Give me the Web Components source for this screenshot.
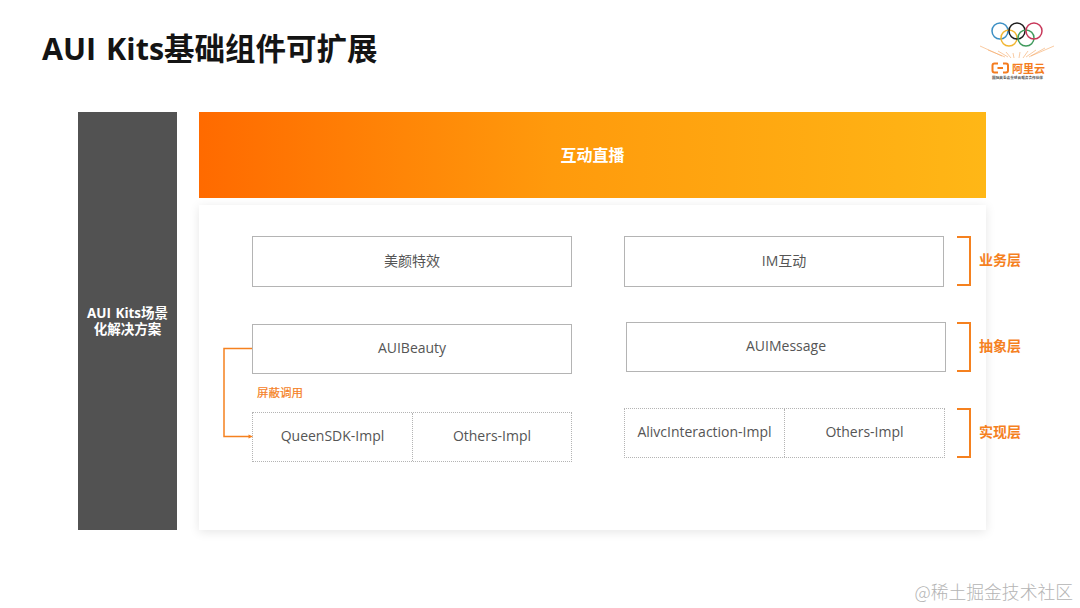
<!DOCTYPE html>
<html lang="zh">
<head>
<meta charset="utf-8">
<title>AUI Kits</title>
<style>
  html, body { margin: 0; background: #fff; }
  body { font-family: "Open Sans", "Noto Sans CJK SC", sans-serif; }
</style>
</head>
<body>
<aui-slide>
  <aui-logo slot="logo"></aui-logo>
  <span slot="title">AUI Kits基础组件可扩展</span>
  <aui-side slot="side">AUI Kits场景<br>化解决方案</aui-side>
  <aui-banner slot="banner">互动直播</aui-banner>
  <aui-card slot="card">
    <aui-column slot="left" top="31">
      <aui-box h="51">美颜特效</aui-box>
      <aui-box gap="37">AUIBeauty</aui-box>
      <aui-note>屏蔽调用</aui-note>
      <aui-impl a="QueenSDK-Impl" b="Others-Impl"></aui-impl>
      <aui-arrow></aui-arrow>
    </aui-column>
    <aui-column slot="right" top="31">
      <aui-box h="51">IM互动</aui-box>
      <aui-box gap="35" shift="2">AUIMessage</aui-box>
      <aui-impl gap="36" w="321" a="AlivcInteraction-Impl" b="Others-Impl"></aui-impl>
    </aui-column>
    <aui-column slot="tags" top="31">
      <aui-tag>业务层</aui-tag>
      <aui-tag gap="36">抽象层</aui-tag>
      <aui-tag gap="36">实现层</aui-tag>
    </aui-column>
  </aui-card>
  <span slot="mark">@稀土掘金技术社区</span>
</aui-slide>

<script>
class AuiSlide extends HTMLElement {
  constructor() {
    super()
    this.attachShadow({mode: 'open'}).innerHTML = `
      <style>
        :host {
          display: block;
          position: relative;
          width: 1080px;
          height: 608px;
          overflow: hidden;
          background: #fff;
        }
        header {
          height: 112px;
          box-sizing: border-box;
          padding: 26px 0 0 42px;
          font-size: 30.5px;
          line-height: 44px;
          font-weight: 700;
          word-spacing: 2px;
          color: #141414;
        }
        main {
          display: grid;
          grid-template-columns: 99px 787px;
          column-gap: 22px;
          padding-left: 78px;
        }
        .stack { display: flex; flex-direction: column; gap: 7px; }
        .logo { position: absolute; left: 982px; top: 14px; }
        .mark {
          position: absolute;
          right: 7px;
          bottom: 5px;
          font-size: 17.8px;
          line-height: 24px;
          color: #b4b4b4;
          font-family: "Noto Sans CJK SC", sans-serif;
          font-weight: 300;
        }
      </style>
      <header><slot name="title"></slot></header>
      <div class="logo"><slot name="logo"></slot></div>
      <main>
        <slot name="side"></slot>
        <div class="stack">
          <slot name="banner"></slot>
          <slot name="card"></slot>
        </div>
      </main>
      <div class="mark"><slot name="mark"></slot></div>
    `
  }
}

class AuiSide extends HTMLElement {
  constructor() {
    super()
    this.attachShadow({mode: 'open'}).innerHTML = `
      <style>
        :host {
          display: flex;
          align-items: center;
          justify-content: center;
          height: 418px;
          background: #525252;
          color: #fff;
          font-size: 13.5px;
          line-height: 16px;
          font-weight: 700;
          word-spacing: 1px;
          text-align: center;
        }
      </style>
      <div><slot></slot></div>
    `
  }
}

class AuiBanner extends HTMLElement {
  constructor() {
    super()
    this.attachShadow({mode: 'open'}).innerHTML = `
      <style>
        :host {
          display: flex;
          align-items: center;
          justify-content: center;
          box-sizing: border-box;
          height: 86px;
          padding-bottom: 3px;
          background: linear-gradient(90deg, #ff6a00 0%, #ff9a0c 45%, #ffb716 100%);
          color: #fff;
          font-size: 16px;
          font-weight: 700;
        }
      </style>
      <slot></slot>
    `
  }
}

class AuiCard extends HTMLElement {
  constructor() {
    super()
    this.attachShadow({mode: 'open'}).innerHTML = `
      <style>
        :host {
          display: grid;
          grid-template-columns: 320px 322px auto;
          column-gap: 52px;
          height: 325px;
          box-sizing: border-box;
          padding-left: 53px;
          background: #fff;
          box-shadow: 0 2px 10px rgba(0, 0, 0, .1);
        }
        .tags { margin-left: -41px; }
      </style>
      <slot name="left"></slot>
      <slot name="right"></slot>
      <div class="tags"><slot name="tags"></slot></div>
    `
  }
}

class AuiColumn extends HTMLElement {
  constructor() {
    super()
    this.attachShadow({mode: 'open'}).innerHTML = `
      <style>
        :host {
          display: flex;
          flex-direction: column;
          align-items: flex-start;
          position: relative;
        }
      </style>
      <slot></slot>
    `
  }
  connectedCallback() {
    this.style.paddingTop = (this.getAttribute('top') || 0) + 'px'
  }
}

class AuiBox extends HTMLElement {
  constructor() {
    super()
    this.attachShadow({mode: 'open'}).innerHTML = `
      <style>
        :host {
          display: flex;
          align-items: center;
          justify-content: center;
          box-sizing: border-box;
          width: 320px;
          height: 50px;
          padding-bottom: 3px;
          border: 1px solid #b4b4b4;
          background: #fff;
          color: #555;
          font-size: 14px;
        }
      </style>
      <slot></slot>
    `
  }
  connectedCallback() {
    this.style.marginTop = (this.getAttribute('gap') || 0) + 'px'
    this.style.marginLeft = (this.getAttribute('shift') || 0) + 'px'
    this.style.height = (this.getAttribute('h') || 50) + 'px'
  }
}

class AuiNote extends HTMLElement {
  constructor() {
    super()
    this.attachShadow({mode: 'open'}).innerHTML = `
      <style>
        :host {
          display: block;
          height: 38px;
          box-sizing: border-box;
          padding: 10px 0 0 5px;
          color: #f5811f;
          font-size: 11.5px;
          line-height: 18px;
          -webkit-text-stroke: .2px #f5811f;
        }
      </style>
      <slot></slot>
    `
  }
}

class AuiImpl extends HTMLElement {
  constructor() {
    super()
    this.attachShadow({mode: 'open'}).innerHTML = `
      <style>
        :host {
          display: grid;
          grid-template-columns: 159px 1fr;
          box-sizing: border-box;
          width: 320px;
          height: 50px;
          border: 1px dotted #b4b4b4;
          color: #555;
          font-size: 14px;
        }
        div { display: flex; align-items: center; justify-content: center; white-space: nowrap; padding-bottom: 3px; }
        div + div { border-left: 1px dotted #b4b4b4; }
      </style>
      <div class="a"></div>
      <div class="b"></div>
    `
  }
  connectedCallback() {
    this.shadowRoot.querySelector('.a').textContent = this.getAttribute('a')
    this.shadowRoot.querySelector('.b').textContent = this.getAttribute('b')
    this.style.marginTop = (this.getAttribute('gap') || 0) + 'px'
    this.style.width = (this.getAttribute('w') || 320) + 'px'
  }
}

// bracket + label on the right of each row
class AuiTag extends HTMLElement {
  constructor() {
    super()
    this.attachShadow({mode: 'open'}).innerHTML = `
      <style>
        :host {
          display: flex;
          align-items: center;
          gap: 8px;
          height: 50px;
          color: #f5811f;
          font-size: 14px;
          font-weight: 700;
          white-space: nowrap;
        }
        span { padding-bottom: 4px; }
        i {
          display: block;
          box-sizing: border-box;
          width: 14px;
          height: 50px;
          border: 2px solid #f5811f;
          border-left: 0;
        }
      </style>
      <i></i><span><slot></slot></span>
    `
  }
  connectedCallback() {
    this.style.marginTop = (this.getAttribute('gap') || 0) + 'px'
  }
}

// connector from AUIBeauty down to the impl row, sits over the left column
class AuiArrow extends HTMLElement {
  constructor() {
    super()
    this.attachShadow({mode: 'open'}).innerHTML = `
      <style>
        :host { position: absolute; left: -30px; top: 142px; display: block; }
        svg { display: block; }
      </style>
      <svg width="31" height="92" viewBox="0 0 31 92" fill="none">
        <path d="M30 1.500H2V89.500H27" stroke="#f5811f" stroke-width="1.500"/>
        <path d="M31 89.500L26.500 87.500V91.500Z" fill="#f5811f"/>
      </svg>
    `
  }
}

class AuiLogo extends HTMLElement {
  constructor() {
    super()
    this.attachShadow({mode: 'open'}).innerHTML = `
      <style>
        :host { display: block; width: 68px; height: 74px; position: relative; }
        svg { position: absolute; left: 0; top: 0; overflow: visible; }
        .name {
          position: absolute;
          left: 30px;
          top: 47px;
          font-size: 11px;
          line-height: 14px;
          font-weight: 700;
          color: #f47c20;
          white-space: nowrap;
          font-family: "Noto Sans CJK SC", sans-serif;
        }
        .sub {
          position: absolute;
          left: 10px;
          top: 61px;
          font-size: 3.650px;
          line-height: 5px;
          color: #555;
          font-weight: 700;
          white-space: nowrap;
          font-family: "Noto Sans CJK SC", sans-serif;
        }
      </style>
      <svg width="68" height="74" viewBox="0 0 68 74" fill="none">
        <g stroke-width="1.500">
          <circle cx="18" cy="17" r="8" stroke="#3b8fc4"/>
          <circle cx="27" cy="24" r="8" stroke="#f2b632"/>
          <circle cx="35" cy="17" r="8" stroke="#1c1c1c"/>
          <circle cx="44" cy="24" r="8" stroke="#3f9a5c"/>
          <circle cx="52" cy="17" r="8" stroke="#c8385a"/>
        </g>
        <g stroke="#f5a765" stroke-width=".6">
          <path d="M-2 32L20 42M6 36L23 43M16 37L26 43M24 38L29 44M31 39L32 44M38 38L37 44M46 37L41 44M54 36L44 43M63 34L47 43M72 32L49 42"/>
        </g>
        <path d="M16 49.500H12.500Q10.500 49.500 10.500 51.500V56.500Q10.500 58.500 12.500 58.500H16M21 49.500H24Q26 49.500 26 51.500V56.500Q26 58.500 24 58.500H21M15.500 54H21" stroke="#f47c20" stroke-width="2"/>
      </svg>
      <span class="name">阿里云</span>
      <span class="sub">国际奥委会全球云服务合作伙伴</span>
    `
  }
}

customElements.define('aui-slide', AuiSlide)
customElements.define('aui-side', AuiSide)
customElements.define('aui-banner', AuiBanner)
customElements.define('aui-card', AuiCard)
customElements.define('aui-column', AuiColumn)
customElements.define('aui-box', AuiBox)
customElements.define('aui-note', AuiNote)
customElements.define('aui-impl', AuiImpl)
customElements.define('aui-tag', AuiTag)
customElements.define('aui-arrow', AuiArrow)
customElements.define('aui-logo', AuiLogo)
</script>
</body>
</html>
